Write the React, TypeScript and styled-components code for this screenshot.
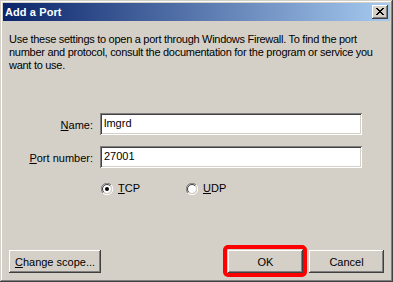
import React from "react";
import styled, { createGlobalStyle } from "styled-components";

const GlobalStyle = createGlobalStyle`
  html, body { margin: 0; padding: 0; background: #d4d0c8; }
  body { font-family: "Liberation Sans", Arial, sans-serif; font-size: 11px; color: #000; }
`;

const Window = styled.div`
  box-sizing: border-box;
  width: 393px;
  height: 282px;
  padding: 3px;
  background: #d4d0c8;
  box-shadow: inset -1px -1px #404040, inset 1px 1px #d4d0c8,
    inset -2px -2px #808080, inset 2px 2px #ffffff;
  display: flex;
  flex-direction: column;
`;

const TitleBar = styled.div`
  height: 18px;
  flex: none;
  background: linear-gradient(to right, #0a246a, #a6caf0);
  display: flex;
  align-items: center;
  justify-content: space-between;
  padding: 0 2px 0 2px;
`;

const Title = styled.span`
  color: #fff;
  font-weight: bold;
  font-size: 11px;
  line-height: 13px;
  letter-spacing: 0.1px;
`;

const CloseButton = styled.div`
  width: 16px;
  height: 14px;
  box-sizing: border-box;
  background: #d4d0c8;
  box-shadow: inset -1px -1px #404040, inset 1px 1px #ffffff,
    inset -2px -2px #808080, inset 2px 2px #d4d0c8;
  display: flex;
  padding: 3px 0 0 4px;
`;

const Body = styled.div`
  flex: 1;
  display: flex;
  flex-direction: column;
  padding: 12px 6px 6px 6px;
`;

const Description = styled.p`
  margin: 0;
  line-height: 13px;
  white-space: nowrap;
  letter-spacing: -0.28px;
`;

const Form = styled.div`
  display: grid;
  grid-template-columns: 84px 262px;
  column-gap: 7px;
  row-gap: 11px;
  margin-top: 41px;
  align-items: center;
`;

const Label = styled.label`
  text-align: right;
  line-height: 13px;
  padding-top: 2px;
`;

const Field = styled.div`
  box-sizing: border-box;
  height: 22px;
  background: #fff;
  box-shadow: inset 1px 1px #808080, inset -1px -1px #ffffff,
    inset 2px 2px #404040, inset -2px -2px #d4d0c8;
  padding: 4px 3px 0 4px;
  line-height: 13px;
`;

const U = styled.span`
  text-decoration: underline;
`;

const RadioRow = styled.div`
  grid-column: 2;
  display: flex;
  align-items: center;
  margin-top: 3px;
  padding-left: 1px;
`;

const RadioItem = styled.div<{ $width: number }>`
  display: flex;
  align-items: center;
  gap: 5px;
  width: ${(p) => p.$width}px;
  line-height: 13px;
`;

const Spacer = styled.div`
  flex: 1;
`;

const ButtonRow = styled.div`
  display: flex;
  align-items: center;
`;

const Button = styled.div<{ $width: number }>`
  position: relative;
  box-sizing: border-box;
  width: ${(p) => p.$width}px;
  height: 23px;
  background: #d4d0c8;
  box-shadow: inset -1px -1px #404040, inset 1px 1px #ffffff,
    inset -2px -2px #808080, inset 2px 2px #d4d0c8;
  display: flex;
  align-items: center;
  justify-content: center;
  line-height: 13px;
  padding-top: 1px;
`;

const RightButtons = styled.div`
  margin-left: auto;
  display: flex;
  gap: 6px;
`;

const Highlight = styled.div`
  position: absolute;
  top: -5px;
  left: -5px;
  right: -4px;
  bottom: -4px;
  border: 4px solid #ff0000;
  border-radius: 5px;
  pointer-events: none;
`;

const CloseGlyph = () => (
  <svg width="8" height="7" viewBox="0 0 8 7" shapeRendering="crispEdges">
    <path
      d="M0 0h2v1H0zM6 0h2v1H6zM1 1h2v1H1zM5 1h2v1H5zM2 2h4v1H2zM3 3h2v1H3zM2 4h4v1H2zM1 5h2v1H1zM5 5h2v1H5zM0 6h2v1H0zM6 6h2v1H6z"
      fill="#000"
    />
  </svg>
);

const Radio = ({ checked }: { checked?: boolean }) => (
  <svg width="12" height="12" viewBox="0 0 12 12">
    <path d="M1.9 10.1 A5.5 5.5 0 0 1 10.1 1.9" fill="none" stroke="#808080" />
    <path d="M10.1 1.9 A5.5 5.5 0 0 1 1.9 10.1" fill="none" stroke="#ffffff" />
    <circle cx="6" cy="6" r="4" fill="#fff" />
    <path d="M2.8 9.2 A4.5 4.5 0 0 1 9.2 2.8" fill="none" stroke="#404040" />
    <path d="M9.2 2.8 A4.5 4.5 0 0 1 2.8 9.2" fill="none" stroke="#d4d0c8" />
    {checked && <circle cx="6" cy="6" r="2" fill="#000" />}
  </svg>
);

export default function App() {
  return (
    <>
      <GlobalStyle />
      <Window>
        <TitleBar>
          <Title>Add a Port</Title>
          <CloseButton>
            <CloseGlyph />
          </CloseButton>
        </TitleBar>
        <Body>
          <Description>
            Use these settings to open a port through Windows Firewall. To find the port
            <br />
            number and protocol, consult the documentation for the program or service you
            <br />
            want to use.
          </Description>
          <Form>
            <Label>
              <U>N</U>ame:
            </Label>
            <Field>lmgrd</Field>
            <Label>
              <U>P</U>ort number:
            </Label>
            <Field>27001</Field>
            <RadioRow>
              <RadioItem $width={85}>
                <Radio checked />
                <span>
                  <U>T</U>CP
                </span>
              </RadioItem>
              <RadioItem $width={60}>
                <Radio />
                <span>
                  <U>U</U>DP
                </span>
              </RadioItem>
            </RadioRow>
          </Form>
          <Spacer />
          <ButtonRow>
            <Button $width={92}>
              <span>
                <U>C</U>hange scope...
              </span>
            </Button>
            <RightButtons>
              <Button $width={75}>
                OK
                <Highlight />
              </Button>
              <Button $width={75}>Cancel</Button>
            </RightButtons>
          </ButtonRow>
        </Body>
      </Window>
    </>
  );
}
